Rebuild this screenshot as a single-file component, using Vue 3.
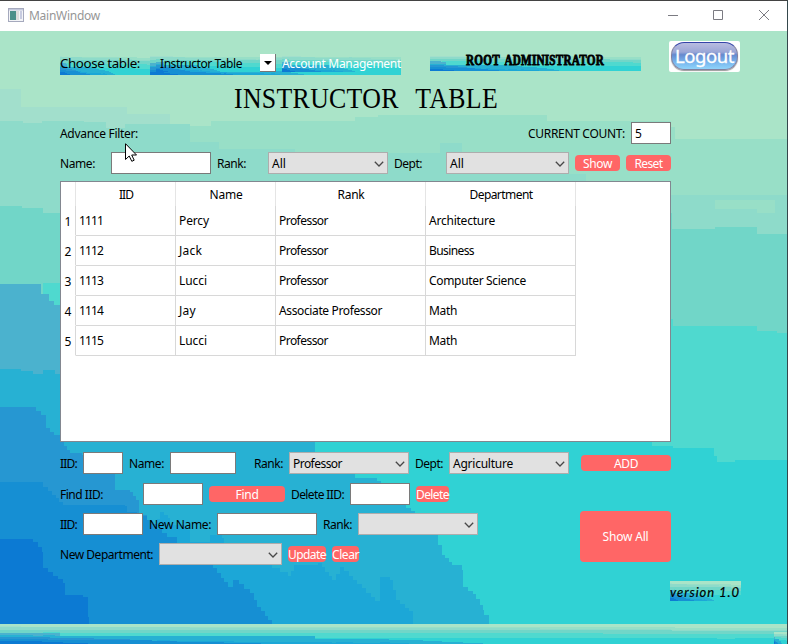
<script setup>
// Terraced wallpaper bands, painted back to front
const bands = [
  ['#a2dfcc', '0,89 21,89 21,107 127,107 127,114 168,114 170,124 190,124 190,160 0,160'],
  ['#98dfc7', '190,142 190,126 211,126 211,121 355,121 355,117 378,117 378,115 543,115 547,121 671,121 671,127 675,139 787,139 787,240 190,240'],
  ['#8edbca', '0,121 23,123 42,121 84,122 106,119 106,128 125,128 125,124 190,124 190,142 219,142 219,149 295,149 295,153 438,153 440,143 460,143 462,153 540,153 540,174 586,174 586,181 671,195 787,195 787,280 0,280'],
  ['#98dfc7', '715,200 757,200 775,200 775,213 757,213 757,209 715,209'],
  ['#71d6c8', '0,206 22,206 22,208 43,208 43,213 60,213 672,213 672,229 715,229 715,227 752,227 757,234 787,234 787,360 0,360'],
  ['#4fd9cf', '43,283 60,285 671,319 673,326 753,326 757,331 777,333 787,333 787,470 43,470'],
  ['#30d2d4', '60,435 652,435 652,446 673,448 714,448 714,456 717,462 733,462 735,460 787,460 787,624 60,624'],
  ['#4bb2ce', '0,284 41,284 41,294 49,294 49,301 54,301 54,305 60,305 60,400 0,400'],
  ['#27b1d3', '0,369 21,369 21,371 33,374 43,370 51,370 55,374 60,376 60,400 315,400 315,442 315,463 355,474 355,478 377,481 400,505 411,511 434,535 442,555 452,565 462,570 463,587 473,594 483,610 484,615 489,617 489,624 0,624'],
  ['#1ca7d7', '157,519 160,512 168,518 170,525 183,527 190,533 190,542 207,542 210,535 222,538 224,544 250,562 272,568 288,576 294,565 318,563 332,580 340,567 353,580 375,601 380,577 390,580 396,600 413,615 413,624 157,624'],
  ['#2697d2', '0,407 30,407 41,415 46,428 54,435 60,435 64,446 70,453 82,455 111,473 115,490 130,492 136,500 139,515 147,520 147,560 0,560'],
  ['#168fd3', '0,482 30,482 43,487 52,495 63,505 125,506 127,512 147,520 167,537 177,540 177,560 197,565 213,568 228,587 233,580 250,593 257,607 272,624 0,624'],
  ['#0c7ad3', '0,539 20,539 33,542 42,552 43,568 63,583 65,595 83,597 88,617 89,624 0,624'],
]

// Turns slanted outline segments into small stair steps
function stepped(str) {
  const pts = str.split(' ').map(p => p.split(',').map(Number))
  let d = `M${pts[0][0]} ${pts[0][1]}`
  for (let i = 1; i < pts.length; i++) {
    const [ax, ay] = pts[i - 1]
    const [bx, by] = pts[i]
    const n = Math.max(1, Math.round(Math.min(Math.abs(bx - ax), Math.abs(by - ay)) / 4))
    for (let k = 1; k <= n; k++) {
      d += `H${Math.round(ax + ((bx - ax) * k) / n)}V${Math.round(ay + ((by - ay) * k) / n)}`
    }
  }
  return d + 'Z'
}
const shapes = bands.map(([fill, pts]) => ({ fill, d: stepped(pts) }))

// Spreads the letters of a label over the given width, allowing for a scaled parent
const vFit = {
  mounted(el, { value, modifiers }) {
    const natural = el.getBoundingClientRect().width
    const scale = modifiers.scaled ? natural / el.offsetWidth : 1
    const n = el.textContent.length
    el.style.letterSpacing = `${(value - natural) / scale / n}px`
  },
}

const headers = [['IID', 14], ['Name', 33], ['Rank', 27], ['Department', 63]]
const people = [
  [['1111', 24], ['Percy', 30], ['Professor', 49], ['Architecture', 66]],
  [['1112', 24], ['Jack', 23], ['Professor', 49], ['Business', 45]],
  [['1113', 24], ['Lucci', 28], ['Professor', 49], ['Computer Science', 97]],
  [['1114', 24], ['Jay', 17], ['Associate Professor', 103], ['Math', 28]],
  [['1115', 24], ['Lucci', 28], ['Professor', 49], ['Math', 28]],
]
</script>

<template>
  <div class="window">
    <svg class="defs" width="0" height="0">
      <symbol id="wall" viewBox="0 31 787 593" preserveAspectRatio="none">
        <rect x="0" y="31" width="787" height="593" fill="#aae4c8" />
        <path v-for="(s, i) in shapes" :key="i" :d="s.d" :fill="s.fill" shape-rendering="crispEdges" />
      </symbol>
      <symbol id="chev" viewBox="0 0 10 6">
        <path d="M.8.8 5 5 9.2.8" fill="none" stroke="#484848" stroke-width="1.3" />
      </symbol>
    </svg>

    <header class="titlebar">
      <svg class="appicon" width="16" height="14" viewBox="0 0 16 14">
        <rect x=".5" y=".5" width="15" height="13" fill="#f3f4f7" stroke="#a5a9bd" />
        <rect x="1" y="1" width="14" height="1.5" fill="#c3c8dc" />
        <rect x="2" y="3" width="6" height="9" fill="#4b8f8a" />
        <rect x="8" y="3" width="3" height="9" fill="#dcdcdc" />
        <rect x="12" y="3" width="2" height="8" fill="#c7cbe0" />
      </svg>
      <span v-fit="71" class="t">MainWindow</span>
      <svg class="controls" width="104" height="12" viewBox="0 0 104 12" fill="none" stroke="#7b7b82">
        <path d="M0 6.500h10M45.500 1.500h9v9h-9zM91 1l10 10M101 1 91 11" />
      </svg>
    </header>

    <main class="body">
      <svg class="wall"><use href="#wall" /></svg>
      <div class="content">
        <div class="top">
          <div class="choose"><svg class="wall"><use href="#wall" /></svg><span v-fit="80" class="t big">Choose table:</span></div>
          <div class="picker">
            <svg class="wall"><use href="#wall" /></svg>
            <div class="current"><svg class="wall"><use href="#wall" /></svg><span v-fit="82" class="t">Instructor Table</span></div>
            <button class="drop"><svg width="8" height="4" viewBox="0 0 8 4"><path d="M0 0h8L4 4z" /></svg></button>
            <a class="account"><svg class="wall"><use href="#wall" /></svg><span v-fit="119" class="t">Account Management</span></a>
          </div>
          <div class="role"><svg class="wall"><use href="#wall" /></svg><div class="narrow"><span v-fit.scaled="138" class="t">ROOT ADMINISTRATOR</span></div></div>
          <div class="logout"><button class="pill"><span v-fit="59" class="t">Logout</span></button></div>
        </div>

        <h1><span v-fit.scaled="264" class="t">INSTRUCTOR TABLE</span></h1>

        <div class="row countrow">
          <span v-fit="78" class="t">Advance Filter:</span>
          <span v-fit="97" class="t count">CURRENT COUNT:</span>
          <div class="field"><span class="t">5</span></div>
        </div>
        <div class="row filter">
          <span v-fit="35" class="t">Name:</span>
          <div class="field"></div>
          <span v-fit="29" class="t">Rank:</span>
          <div class="select"><span v-fit="14" class="t">All</span><svg class="chev"><use href="#chev" /></svg></div>
          <span v-fit="28" class="t">Dept:</span>
          <div class="select"><span v-fit="14" class="t">All</span><svg class="chev"><use href="#chev" /></svg></div>
          <button class="btn"><span v-fit="29" class="t">Show</span></button>
          <button class="btn"><span v-fit="28" class="t">Reset</span></button>
        </div>

        <div class="table">
          <div class="line head">
            <div class="cell num"></div>
            <div v-for="h in headers" :key="h[0]" class="cell"><span v-fit="h[1]" class="t">{{ h[0] }}</span></div>
          </div>
          <div v-for="(p, i) in people" :key="i" class="line">
            <div class="cell num"><span class="t">{{ i + 1 }}</span></div>
            <div v-for="(c, j) in p" :key="j" class="cell"><span v-fit="c[1]" class="t">{{ c[0] }}</span></div>
          </div>
        </div>

        <div class="row add">
          <span v-fit="17" class="t">IID:</span>
          <div class="field"></div>
          <span v-fit="35" class="t">Name:</span>
          <div class="field"></div>
          <span v-fit="29" class="t end">Rank:</span>
          <div class="select"><span v-fit="49" class="t">Professor</span><svg class="chev"><use href="#chev" /></svg></div>
          <span v-fit="28" class="t">Dept:</span>
          <div class="select"><span v-fit="60" class="t">Agriculture</span><svg class="chev"><use href="#chev" /></svg></div>
          <button class="btn addbtn"><span v-fit="24" class="t">ADD</span></button>
        </div>
        <div class="row find">
          <span v-fit="43" class="t">Find IID:</span>
          <div class="field"></div>
          <button class="btn"><span v-fit="23" class="t">Find</span></button>
          <span v-fit="53" class="t">Delete IID:</span>
          <div class="field"></div>
          <button class="btn"><span v-fit="33" class="t">Delete</span></button>
        </div>
        <div class="bottom">
          <div class="edits">
            <div class="row update">
              <span v-fit="17" class="t">IID:</span>
              <div class="field"></div>
              <span v-fit="62" class="t">New Name:</span>
              <div class="field"></div>
              <span v-fit="29" class="t">Rank:</span>
              <div class="select"><svg class="chev"><use href="#chev" /></svg></div>
            </div>
            <div class="row dept">
              <span v-fit="93" class="t">New Department:</span>
              <div class="select"><svg class="chev"><use href="#chev" /></svg></div>
              <button class="btn"><span v-fit="38" class="t">Update</span></button>
              <button class="btn"><span v-fit="27" class="t">Clear</span></button>
            </div>
          </div>
          <button class="btn showall"><span v-fit="46" class="t">Show All</span></button>
        </div>
        <div class="version"><svg class="wall"><use href="#wall" /></svg><span v-fit="70" class="t">version 1.0</span></div>
      </div>
      <svg class="cursor" width="12" height="19" viewBox="0 0 12 19">
        <path d="M.5.7v15.800l3.700-3.500 2.600 5.300 2.400-1.100-2.500-5.200h4.800z" fill="#fff" stroke="#000" />
      </svg>
    </main>
    <footer class="status">
      <svg class="wall"><use href="#wall" /></svg>
      <div class="grip"><svg class="wall"><use href="#wall" /></svg></div>
    </footer>
  </div>
</template>

<style>
body { margin: 0; overflow: hidden; }
</style>

<style scoped>
* { box-sizing: border-box; }
.window {
  width: 788px; height: 644px; display: flex; flex-direction: column; overflow: hidden;
  border-top: 1px solid #434343; border-right: 1px solid #35474c; background: #fff;
  font: 12px/16px "Noto Sans", "Open Sans", sans-serif; color: #000;
}
.defs { position: absolute; }
.t { white-space: nowrap; justify-self: start; position: relative; }
button { padding: 0; border: 0; font: inherit; color: inherit; }
.wall { position: absolute; inset: 0; width: 100%; height: 100%; display: block; }

.titlebar { height: 30px; flex: none; display: flex; align-items: center; padding: 0 15px 2px 8px; color: #969696; }
.titlebar .t { top: 1px; }
.appicon { margin-right: 5px; }
.controls { margin-left: auto; }

.body { position: relative; height: 593px; flex: none; }
.content { position: relative; padding: 10px 0 0 60px; }

.top { display: flex; align-items: flex-start; height: 34px; }
.choose { position: relative; width: 90px; height: 21px; margin-top: 13px; display: flex; align-items: center; }
.choose .big { font-size: 13.3px; top: -2px; }
.picker { position: relative; width: 251px; height: 21px; margin-top: 13px; padding-left: 6px; display: flex; align-items: flex-start; }
.current { position: relative; width: 104px; height: 18px; padding: 2px 0 0 4px; display: flex; align-items: center; }
.drop { position: relative; width: 16px; height: 18px; margin-right: 6px; background: #fff; border-right: 1px solid #777; border-bottom: 1px solid #777; display: grid; place-items: center; }
.account { position: relative; width: 119px; height: 18px; padding-top: 2px; color: #fff; display: flex; align-items: center; }
.role { position: relative; width: 211px; height: 17px; margin: 13px 28px 0 29px; padding-left: 36px; display: flex; align-items: center; font: 700 14px/17px "Liberation Serif", serif; -webkit-text-stroke: .8px #000; }
.narrow { display: flex; transform: scaleX(.8); transform-origin: 0 50%; word-spacing: 3px; }
.role .t { top: -2px; }
.logout { width: 71px; height: 31px; padding: 1px 1px 1px 2px; background: #fff; border-radius: 2px; }
.pill { width: 67px; height: 28px; border: 1.500px solid #8180a0; border-top-color: #3444a8; border-radius: 13px; color: #fff; font-size: 18.5px; line-height: 22px; display: grid; place-items: center; background: linear-gradient(#b9bce0 0, #9aa6d6 35%, #6689ce 45%, #79b7ee 75%, #8fd3fa); box-shadow: 0 1px 1px #999; }
.pill .t { justify-self: center; -webkit-text-stroke: .3px #fff; }

h1 { margin: 8px 0 0 174px; height: 32px; width: 270px; font: 400 30px/30px "Liberation Serif", serif; display: flex; transform: scaleX(.86); transform-origin: 0 50%; word-spacing: 12px; }

.row { display: grid; column-gap: 6px; height: 22px; align-items: center; }
.row .t { top: 1px; }
.countrow { margin-top: 7px; grid-template-columns: 462px 97px 40px; }
.filter { margin-top: 8px; grid-template-columns: 45px 100px 45px 120px 46px 123px 45px 45px; }
.add { margin-top: 10px; grid-template-columns: 17px 40px 35px 66px 41px 120px 28px 120px 96px; }
.find { margin-top: 9px; grid-template-columns: 77px 60px 76px 53px 60px 33px; }
.update { grid-template-columns: 17px 60px 62px 100px 29px 120px; }
.dept { margin-top: 8px; grid-template-columns: 93px 123px 38px 27px; }
.end { justify-self: end; }

.field { height: 22px; background: #fff; border: 1px solid #7a7a7a; padding-left: 3px; display: flex; align-items: center; }
.select { height: 22px; background: #e1e1e1; border: 1px solid #adadad; padding: 0 3px 0 3px; display: flex; align-items: center; }
.chev { width: 10px; height: 6px; margin-left: auto; position: relative; top: 1px; }
.btn { height: 16px; background: #f66; color: #fff; border-radius: 4px; display: flex; justify-content: center; align-items: center; }
.addbtn { margin-left: 6px; }

.table { width: 611px; height: 261px; margin-top: 7px; border: 1px solid #828790; background: #fff; }
.line { display: grid; grid-template-columns: 15px 100px 100px 150px 150px; height: 30px; }
.cell { border-right: 1px solid #d8d8d8; border-bottom: 1px solid #d8d8d8; padding: 1px 0 0 3px; display: flex; align-items: center; }
.cell.num { border-bottom-color: transparent; padding: 2px 0 0; justify-content: center; }
.head { height: 24px; }
.head .cell { border-bottom: 0; padding: 2px 0 0 1px; justify-content: center; border-right-color: #e5e5e5; }

.bottom { display: flex; margin-top: 6px; }
.edits { width: 520px; padding-top: 2px; }
.showall { width: 91px; height: 51px; }
.version { position: relative; width: 71px; height: 20px; margin: 16px 0 0 610px; font: italic 13px/22px Lato, sans-serif; -webkit-text-stroke: .2px #000; }

/* pointer floats above the form */
.cursor { position: absolute; left: 125px; top: 112px; }

.status { position: relative; height: 20px; flex: none; }
.grip { position: absolute; right: 0; bottom: 0; width: 13px; height: 12px; }
</style>
